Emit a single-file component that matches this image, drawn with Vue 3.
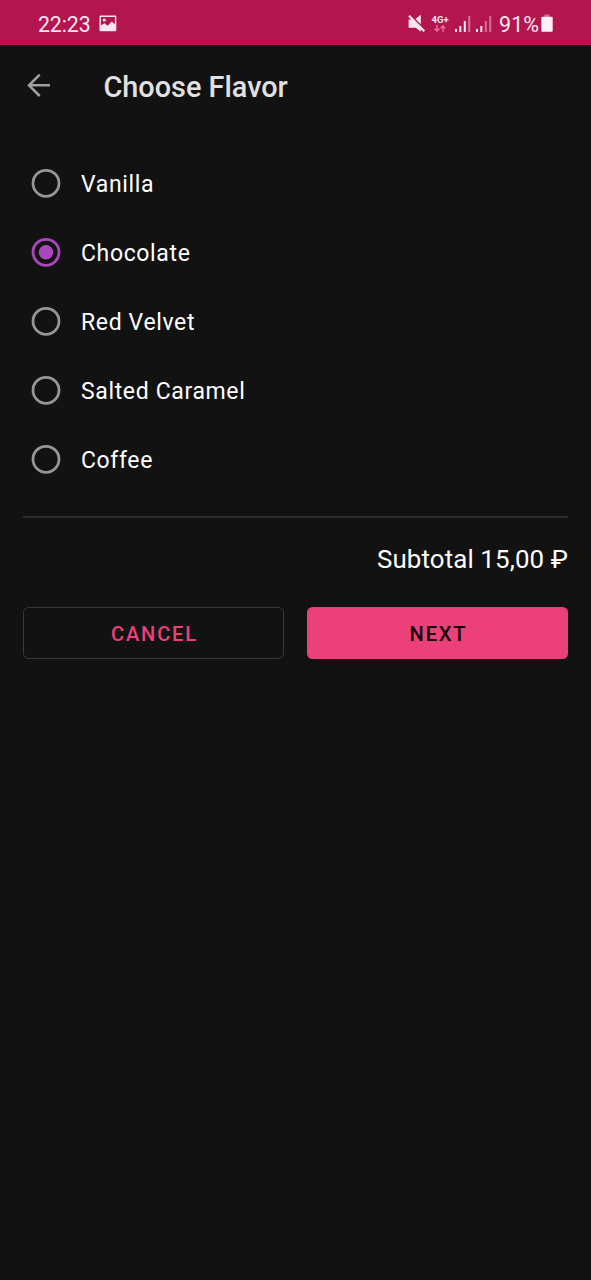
<script setup>
import { ref } from 'vue'

const flavors = ['Vanilla', 'Chocolate', 'Red Velvet', 'Salted Caramel', 'Coffee']
const selected = ref('Chocolate')
</script>

<template>
  <div class="screen">
    <header class="status">
      <span class="clock">22:23</span>
      <svg class="photo" width="18" height="17" viewBox="0 0 18 17">
        <path fill="#fde6f0" fill-rule="evenodd" d="M1.5 0.5h14.8q1 0 1 1v13.800q0 1-1 1H1.500q-1 0-1-1V1.500q0-1 1-1zM1.900 1.900v8.600l3.500-2.200 3.300 2.400 4-4.100 3.200 2.600V1.900z" />
        <circle cx="5.200" cy="5" r="1.600" fill="#fde6f0" />
      </svg>
      <span class="spacer"></span>
      <svg class="mute" width="18" height="19" viewBox="0 0 18 19">
        <path fill="#fde6f0" d="M0.600 5.600h4.200l8 8.400v3.800L7.800 13.700H0.600zM7.500 4.900L12.800 0.800v9.400z" />
        <path stroke="#fde6f0" stroke-width="2.300" d="M1 1.800L16.300 17.300" />
      </svg>
      <span class="network">
        <span class="network-type">4G+</span>
        <svg width="12" height="7" viewBox="0 0 12 7">
          <path fill="none" stroke="#e56b9c" stroke-width="1.500" d="M3 0v6M0.600 3.600L3 6l2.400-2.400M9 7V1M6.600 3.400L9 1l2.400 2.400" />
        </svg>
      </span>
      <svg class="signal" width="16" height="17" viewBox="0 0 16 17">
        <path fill="#fde6f0" d="M0 13h2v3H0zM4.300 10h2v6h-2zM8.800 5h2v11h-2z" />
        <path fill="#da6d98" d="M13.200 0h2v16h-2z" />
      </svg>
      <svg class="signal" width="16" height="17" viewBox="0 0 16 17">
        <path fill="#fde6f0" d="M0 13h2v3H0zM4.300 10h2v6h-2z" />
        <path fill="#da6d98" d="M8.800 5h2v11h-2zM13.200 0h2v16h-2z" />
      </svg>
      <span class="percent">91%</span>
      <svg class="battery" width="12" height="18" viewBox="0 0 12 18">
        <path fill="#da6d98" d="M3.500 0.500h5v2.500h-5z" />
        <rect x="0.300" y="2.700" width="11.400" height="15" rx="1" fill="#fff0f6" />
      </svg>
    </header>

    <nav class="toolbar">
      <svg class="back" width="24" height="24" viewBox="0 0 24 24">
        <path fill="none" stroke="#a0a0a0" stroke-width="2.600" d="M23 12.300H2M12.700 1.600L2 12.300l10.700 10.700" />
      </svg>
      <h1>Choose Flavor</h1>
    </nav>

    <main>
      <div class="options" role="radiogroup">
        <div
          v-for="flavor in flavors"
          :key="flavor"
          class="option"
          role="radio"
          :aria-checked="selected === flavor"
          @click="selected = flavor"
        >
          <svg class="radio" :class="{ on: selected === flavor }" width="30" height="30" viewBox="0 0 30 30">
            <circle class="ring" cx="15" cy="15.300" r="13" />
            <circle v-if="selected === flavor" class="dot" cx="15" cy="15.300" r="7.200" />
          </svg>
          <span>{{ flavor }}</span>
        </div>
      </div>
      <div class="divider"></div>
      <p class="subtotal">Subtotal 15,00 ₽</p>
      <div class="actions">
        <button class="cancel">CANCEL</button>
        <button class="next">NEXT</button>
      </div>
    </main>
  </div>
</template>

<style>
body {
  margin: 0;
  background: #121212;
}
</style>

<style scoped>
.screen {
  height: 1280px;
  overflow: hidden;
  background: #121212;
  color: #fff;
  font-family: Roboto, "Noto Sans", sans-serif;
}
.status {
  box-sizing: border-box;
  display: flex;
  align-items: center;
  height: 45px;
  padding: 2px 38px 0;
  background: #b3164f;
  color: #fde6f0;
}
.clock {
  margin-top: 2px;
  font-size: 21.3px;
  letter-spacing: -0.1px;
}
.photo {
  margin: -1px 0 0 8px;
}
.spacer {
  flex: 1;
}
.mute {
  margin-top: -1px;
}
.network {
  display: flex;
  flex-direction: column;
  align-items: center;
  width: 18px;
  margin: 0 1px 0 5px;
}
.network-type {
  font-size: 9.500px;
  font-weight: 700;
  line-height: 10px;
}
.signal {
  margin: 2px 0 0 5px;
}
.percent {
  margin: 2px 0 0 7px;
  font-size: 21.5px;
}
.battery {
  margin: -1px 0 0 2px;
}
.toolbar {
  display: flex;
  align-items: center;
  height: 81px;
  padding-left: 27px;
}
.back {
  margin-top: -1px;
}
h1 {
  margin: 2px 0 0 52.500px;
  font-size: 28.850px;
  font-weight: 500;
  line-height: 34px;
  color: #e1e1e1;
}
main {
  padding: 23px 23px 0;
}
.option {
  display: flex;
  align-items: center;
  height: 69px;
  padding-left: 8px;
  font-size: 23px;
  letter-spacing: 0.64px;
}
.radio {
  margin-top: -1.500px;
}
.option span {
  margin: 2px 0 0 20px;
}
.ring {
  fill: none;
  stroke: #969696;
  stroke-width: 2.800;
}
.on .ring {
  stroke: #ab47bc;
}
.dot {
  fill: #ab47bc;
}
.divider {
  height: 2px;
  margin-top: 22px;
  background: #2c2c2c;
}
.subtotal {
  margin: 25px 0 0;
  font-size: 25.875px;
  line-height: 32px;
  letter-spacing: 0.12px;
  text-align: right;
}
.actions {
  display: grid;
  grid-template-columns: 1fr 1fr;
  gap: 23px;
  margin-top: 31.500px;
}
button {
  box-sizing: border-box;
  height: 52.500px;
  padding: 2px 0 0 2px;
  border: 0;
  border-radius: 5.500px;
  font: 500 20.125px Roboto, sans-serif;
  letter-spacing: 1.8px;
}
.cancel {
  border: 1.500px solid #383838;
  background: transparent;
  color: #ec407a;
}
.next {
  background: #ec407a;
  color: #120006;
}
</style>
